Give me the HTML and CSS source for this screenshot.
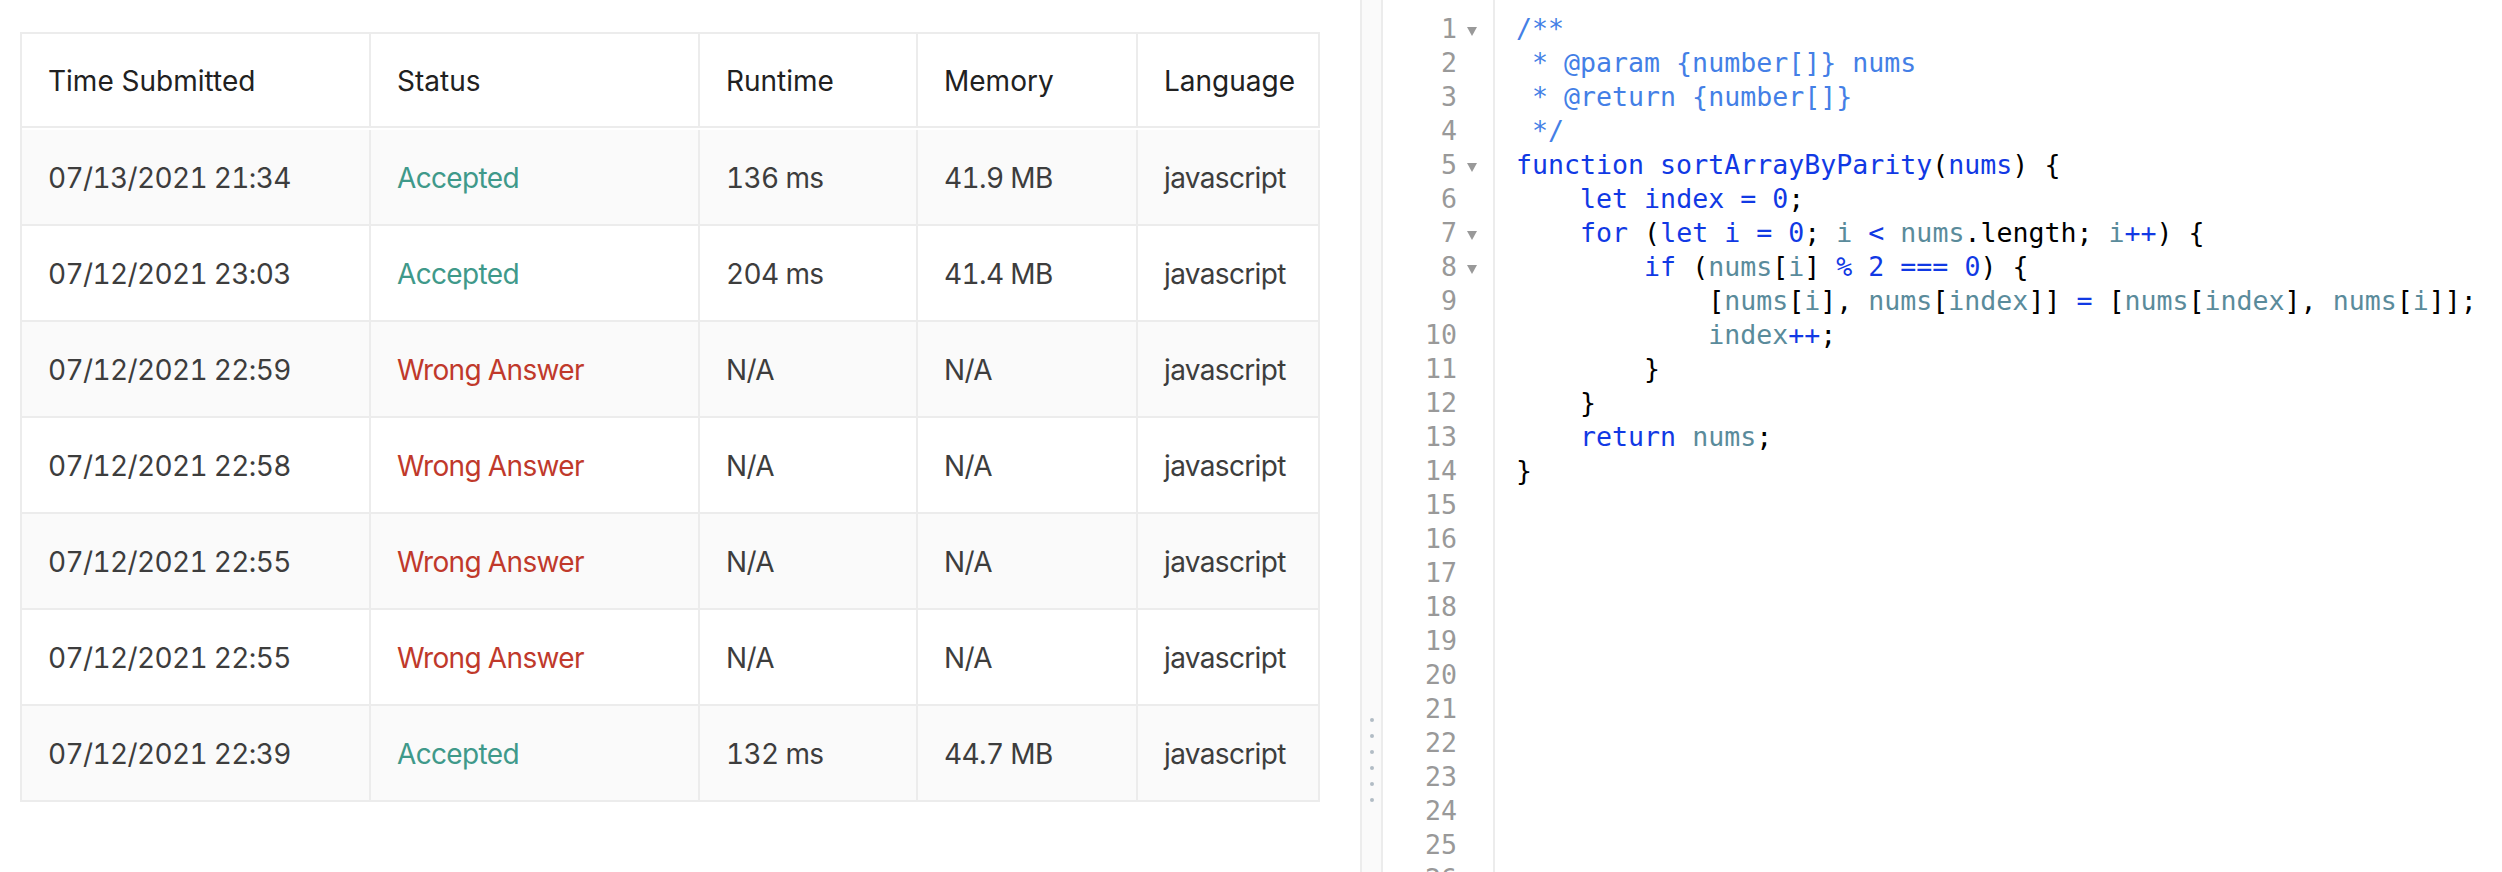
FILE: index.html
```html
<!DOCTYPE html>
<html lang="en">
<head>
<meta charset="utf-8">
<title>Submissions</title>
<link rel="stylesheet" href="styles.css">
</head>
<body>
<div class="page">
  <section class="left">
    <div class="table" role="table">
      <div class="cell head">Time Submitted</div>
      <div class="cell head">Status</div>
      <div class="cell head">Runtime</div>
      <div class="cell head">Memory</div>
      <div class="cell head">Language</div>

      <div class="cell odd">07/13/2021 21:34</div>
      <div class="cell odd ok">Accepted</div>
      <div class="cell odd">136 ms</div>
      <div class="cell odd">41.9 MB</div>
      <div class="cell odd">javascript</div>

      <div class="cell">07/12/2021 23:03</div>
      <div class="cell ok">Accepted</div>
      <div class="cell">204 ms</div>
      <div class="cell">41.4 MB</div>
      <div class="cell">javascript</div>

      <div class="cell odd">07/12/2021 22:59</div>
      <div class="cell odd bad">Wrong Answer</div>
      <div class="cell odd">N/A</div>
      <div class="cell odd">N/A</div>
      <div class="cell odd">javascript</div>

      <div class="cell">07/12/2021 22:58</div>
      <div class="cell bad">Wrong Answer</div>
      <div class="cell">N/A</div>
      <div class="cell">N/A</div>
      <div class="cell">javascript</div>

      <div class="cell odd">07/12/2021 22:55</div>
      <div class="cell odd bad">Wrong Answer</div>
      <div class="cell odd">N/A</div>
      <div class="cell odd">N/A</div>
      <div class="cell odd">javascript</div>

      <div class="cell">07/12/2021 22:55</div>
      <div class="cell bad">Wrong Answer</div>
      <div class="cell">N/A</div>
      <div class="cell">N/A</div>
      <div class="cell">javascript</div>

      <div class="cell odd">07/12/2021 22:39</div>
      <div class="cell odd ok">Accepted</div>
      <div class="cell odd">132 ms</div>
      <div class="cell odd">44.7 MB</div>
      <div class="cell odd">javascript</div>
    </div>
  </section>

  <div class="splitter">
    <span class="dot"></span><span class="dot"></span><span class="dot"></span>
    <span class="dot"></span><span class="dot"></span><span class="dot"></span>
  </div>

  <section class="editor">
    <div class="gutter">
      <div class="gl"><span class="num">1</span><span class="fold"><i class="tri"></i></span></div>
      <div class="gl"><span class="num">2</span><span class="fold"></span></div>
      <div class="gl"><span class="num">3</span><span class="fold"></span></div>
      <div class="gl"><span class="num">4</span><span class="fold"></span></div>
      <div class="gl"><span class="num">5</span><span class="fold"><i class="tri"></i></span></div>
      <div class="gl"><span class="num">6</span><span class="fold"></span></div>
      <div class="gl"><span class="num">7</span><span class="fold"><i class="tri"></i></span></div>
      <div class="gl"><span class="num">8</span><span class="fold"><i class="tri"></i></span></div>
      <div class="gl"><span class="num">9</span><span class="fold"></span></div>
      <div class="gl"><span class="num">10</span><span class="fold"></span></div>
      <div class="gl"><span class="num">11</span><span class="fold"></span></div>
      <div class="gl"><span class="num">12</span><span class="fold"></span></div>
      <div class="gl"><span class="num">13</span><span class="fold"></span></div>
      <div class="gl"><span class="num">14</span><span class="fold"></span></div>
      <div class="gl"><span class="num">15</span><span class="fold"></span></div>
      <div class="gl"><span class="num">16</span><span class="fold"></span></div>
      <div class="gl"><span class="num">17</span><span class="fold"></span></div>
      <div class="gl"><span class="num">18</span><span class="fold"></span></div>
      <div class="gl"><span class="num">19</span><span class="fold"></span></div>
      <div class="gl"><span class="num">20</span><span class="fold"></span></div>
      <div class="gl"><span class="num">21</span><span class="fold"></span></div>
      <div class="gl"><span class="num">22</span><span class="fold"></span></div>
      <div class="gl"><span class="num">23</span><span class="fold"></span></div>
      <div class="gl"><span class="num">24</span><span class="fold"></span></div>
      <div class="gl"><span class="num">25</span><span class="fold"></span></div>
      <div class="gl"><span class="num">26</span><span class="fold"></span></div>
    </div>
    <div class="code">
      <div class="ln"><span class="cm">/**</span></div>
      <div class="ln"><span class="cm"> * @param {number[]} nums</span></div>
      <div class="ln"><span class="cm"> * @return {number[]}</span></div>
      <div class="ln"><span class="cm"> */</span></div>
      <div class="ln"><span class="kw">function</span> <span class="kw">sortArrayByParity</span>(<span class="kw">nums</span>) {</div>
      <div class="ln">    <span class="kw">let</span> <span class="kw">index</span> <span class="kw">=</span> <span class="kw">0</span>;</div>
      <div class="ln">    <span class="kw">for</span> (<span class="kw">let</span> <span class="kw">i</span> <span class="kw">=</span> <span class="kw">0</span>; <span class="vr">i</span> <span class="kw">&lt;</span> <span class="vr">nums</span>.length; <span class="vr">i</span><span class="kw">++</span>) {</div>
      <div class="ln">        <span class="kw">if</span> (<span class="vr">nums</span>[<span class="vr">i</span>] <span class="kw">%</span> <span class="kw">2</span> <span class="kw">===</span> <span class="kw">0</span>) {</div>
      <div class="ln">            [<span class="vr">nums</span>[<span class="vr">i</span>], <span class="vr">nums</span>[<span class="vr">index</span>]] <span class="kw">=</span> [<span class="vr">nums</span>[<span class="vr">index</span>], <span class="vr">nums</span>[<span class="vr">i</span>]];</div>
      <div class="ln">            <span class="vr">index</span><span class="kw">++</span>;</div>
      <div class="ln">        }</div>
      <div class="ln">    }</div>
      <div class="ln">    <span class="kw">return</span> <span class="vr">nums</span>;</div>
      <div class="ln">}</div>
    </div>
  </section>
</div>
</body>
</html>
```

FILE: styles.css
```css
html, body {
  margin: 0;
  padding: 0;
  background: #ffffff;
  overflow: hidden;
}

.page {
  display: flex;
  width: 2502px;
  height: 872px;
  overflow: hidden;
}

.left {
  width: 1360px;
  flex: none;
  padding: 32px 0 0 20px;
  box-sizing: border-box;
}

.table {
  display: grid;
  grid-template-columns: 349px 329px 218px 220px 182px;
  grid-auto-rows: 96px;
  width: 1300px;
  box-sizing: border-box;
  border-top: 2px solid #ececec;
  border-left: 2px solid #ececec;
  font-family: Inter, "Liberation Sans", sans-serif;
  font-size: 28px;
}

.cell {
  box-sizing: border-box;
  border-right: 2px solid #ececec;
  border-bottom: 2px solid #ececec;
  padding: 2px 26px 0 26px;
  display: flex;
  align-items: center;
  color: #3d3d3d;
  white-space: nowrap;
  font-feature-settings: "tnum" 1;
  letter-spacing: -0.65px;
}

.cell.head {
  color: #212121;
  font-feature-settings: normal;
  letter-spacing: 0;
}

.table .cell.head {
  height: 94px;
}

.cell.odd {
  background: #fafafa;
}

.cell.ok {
  color: #3f998a;
}

.cell.bad {
  color: #c0392b;
}

.splitter {
  width: 23px;
  height: 872px;
  flex: none;
  box-sizing: border-box;
  background: #fafafa;
  border-left: 2px solid #ececec;
  border-right: 2px solid #ececec;
  display: flex;
  flex-direction: column;
  align-items: center;
  padding-top: 718px;
  gap: 12px;
}

.dot {
  width: 4px;
  height: 4px;
  border-radius: 50%;
  background: #b1bcc5;
  flex: none;
}

.editor {
  flex: 1;
  display: flex;
  font-family: "DejaVu Sans Mono", "Liberation Mono", monospace;
  font-size: 26.6px;
  line-height: 34px;
  overflow: hidden;
  height: 872px;
}

.gutter {
  width: 112px;
  flex: none;
  box-sizing: border-box;
  border-right: 2px solid #ececec;
  padding-top: 12px;
  color: #999999;
}

.gl {
  display: flex;
  height: 34px;
}

.num {
  width: 74px;
  text-align: right;
}

.fold {
  width: 36px;
  box-sizing: border-box;
  padding: 15px 0 0 10px;
  display: flex;
  align-items: flex-start;
}

.tri {
  width: 0;
  height: 0;
  border-left: 5px solid transparent;
  border-right: 5px solid transparent;
  border-top: 9px solid #999999;
}

.code {
  padding: 12px 0 0 21px;
  color: #000000;
}

.ln {
  height: 34px;
  white-space: pre;
}

.cm {
  color: #447fe6;
}

.kw {
  color: #1139e4;
}

.vr {
  color: #5a8b9b;
}
```
